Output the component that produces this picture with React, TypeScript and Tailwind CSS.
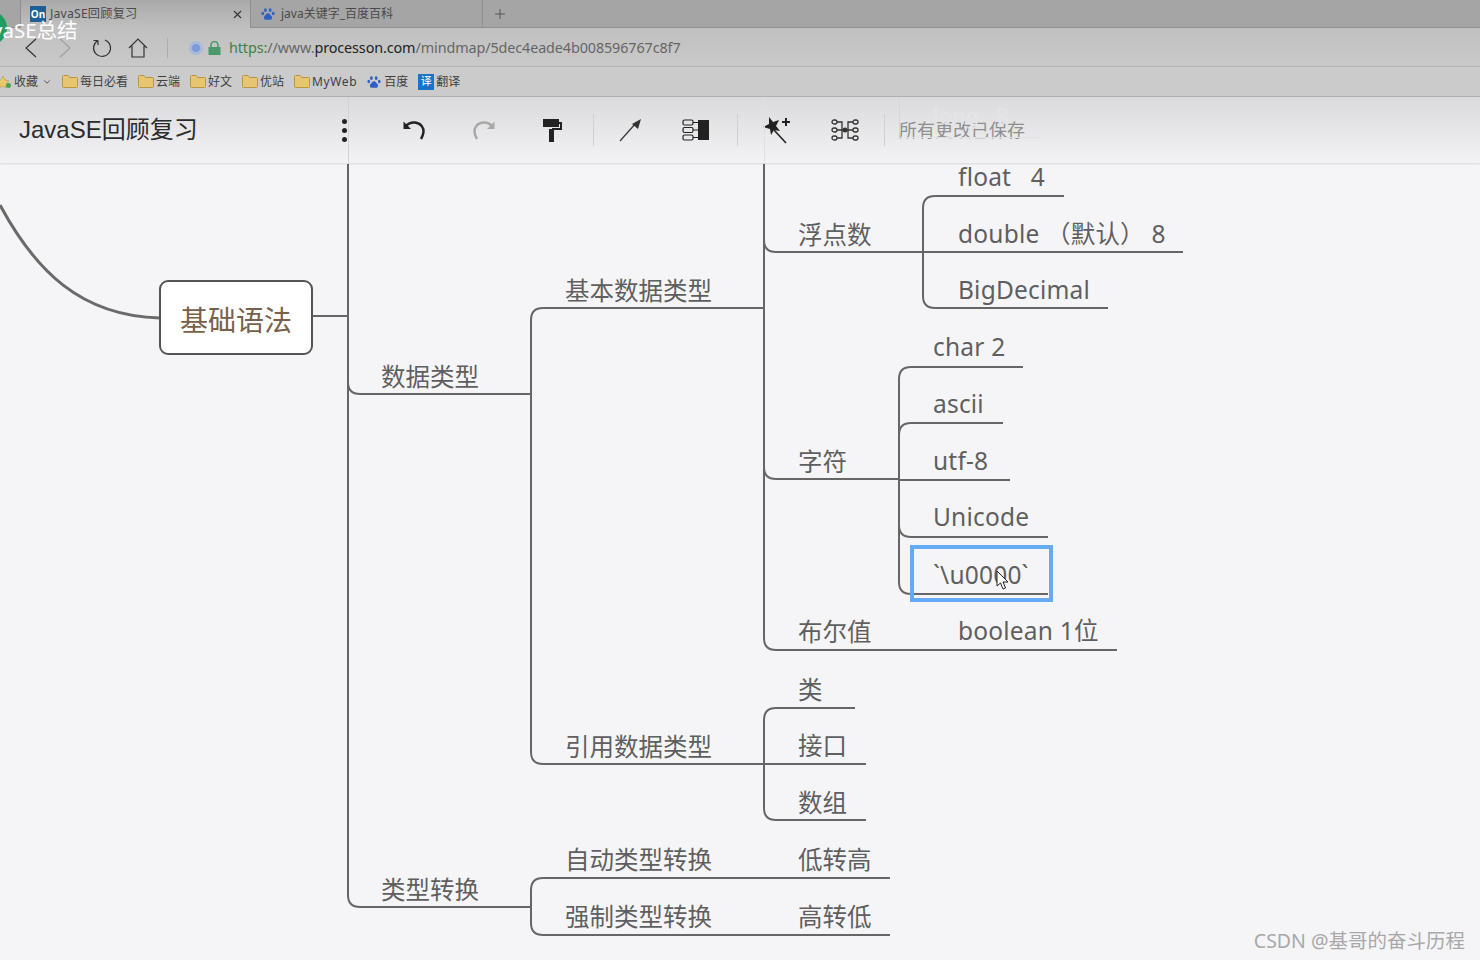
import { ChevronDown, Plus, X } from "lucide-react";

const font = { fontFamily: '"Noto Sans", "Noto Sans CJK SC", sans-serif' };

// connector lines, page coordinates
const lines = [
  "M348 164V895Q348 907 360 907H531",
  "M348 382Q348 394 360 394H531",
  "M312 316H348",
  "M531 752V320Q531 308 543 308H764",
  "M531 752Q531 764 543 764H866",
  "M764 164V638Q764 650 776 650H1117",
  "M764 240Q764 252 776 252H923",
  "M764 467Q764 479 776 479H899",
  "M923 296V208Q923 196 935 196H1064",
  "M923 252H1183",
  "M923 296Q923 308 935 308H1108",
  "M899 582V379Q899 367 911 367H1023",
  "M899 435Q899 423 911 423H1003",
  "M899 480H1010",
  "M899 525Q899 537 911 537H1048",
  "M899 582Q899 594 911 594H1048",
  "M764 808V720Q764 708 776 708H855",
  "M764 808Q764 820 776 820H866",
  "M531 923V890Q531 878 543 878H890",
  "M531 923Q531 935 543 935H890",
];

const labels: [string, number, number][] = [
  ["float   4", 958, 177],
  ["double （默认） 8", 958, 234],
  ["BigDecimal", 958, 290],
  ["浮点数", 798, 235],
  ["基本数据类型", 565, 291],
  ["数据类型", 381, 377],
  ["char 2", 933, 347],
  ["ascii", 933, 404],
  ["utf-8", 933, 461],
  ["Unicode", 933, 517],
  ["`\\u0000`", 933, 575],
  ["字符", 798, 462],
  ["布尔值", 798, 632],
  ["boolean 1位", 958, 631],
  ["类", 798, 690],
  ["接口", 798, 746],
  ["数组", 798, 803],
  ["引用数据类型", 565, 747],
  ["自动类型转换", 565, 860],
  ["低转高", 798, 860],
  ["强制类型转换", 565, 917],
  ["高转低", 798, 917],
  ["类型转换", 381, 890],
];

function Paw({ size = 14 }: { size?: number }) {
  return (
    <svg width={size} height={size} viewBox="0 0 16 16" fill="#2f5fc4">
      <ellipse cx="5" cy="3.5" rx="1.6" ry="2.2" />
      <ellipse cx="10.5" cy="3.5" rx="1.6" ry="2.2" />
      <ellipse cx="2" cy="7.5" rx="1.5" ry="2" />
      <ellipse cx="14" cy="7.5" rx="1.5" ry="2" />
      <path d="M8 7c-2 0-2.400 2-4 3.200C2.600 11.500 3.500 15 6 14.600c1-.2 3-.2 4 0 2.500.4 3.400-3.100 2-4.400C10.400 9 10 7 8 7z" />
    </svg>
  );
}

function Folder() {
  return (
    <svg width="16" height="13" viewBox="0 0 16 13">
      <path d="M.5 1.500Q.5 .5 1.500 .5H6L7.500 2.500H14.500Q15.500 2.500 15.500 3.500V11.500Q15.500 12.500 14.500 12.500H1.500Q.5 12.500 .5 11.500Z" fill="#e6c671" stroke="#b9963f" />
    </svg>
  );
}

function Mark({ label }: { label: string }) {
  return (
    <div className="flex items-center gap-[2px]">
      <Folder />
      <span>{label}</span>
    </div>
  );
}

function Sep() {
  return <div className="h-[32px] w-px bg-[#d0d0d2]" />;
}

function Undo({ color }: { color: string }) {
  return (
    <svg width="28" height="28" viewBox="0 0 28 28" fill="none" stroke={color} strokeWidth="2.4">
      <path d="M5 11Q9 6 15 6.500C21 7 24 12 23.500 16Q23 20 21 23" />
      <path d="M3.500 5.500V13H11Z" fill={color} stroke="none" />
    </svg>
  );
}

export default function App() {
  return (
    <div className="relative h-[960px] w-[1480px] overflow-hidden bg-[#f5f5f8]" style={font}>
      {/* mind map canvas */}
      <div className="absolute inset-0">
        <svg className="absolute inset-0" width="1480" height="960" fill="none" stroke="#666666" strokeWidth="2">
          {lines.map((d) => (
            <path key={d} d={d} />
          ))}
          <path d="M0 205C35 270 80 316 160 318" strokeWidth="3" stroke="#6a6a6a" />
        </svg>
        <div className="absolute left-[159px] top-[280px] flex h-[75px] w-[154px] items-center justify-center rounded-[9px] border-[2.5px] border-[#555555] bg-white pt-[4px] text-[28px] text-[#7a6048]">
          基础语法
        </div>
        {labels.map(([text, x, y]) => (
          <div
            key={text}
            className={
              /^[a-zA-Z`]/.test(text)
                ? "absolute -translate-y-1/2 whitespace-pre text-[24.5px] leading-none tracking-[0.2px] text-[#5f5f5f]"
                : "absolute -translate-y-1/2 whitespace-pre text-[24.5px] leading-none text-[#5f5f5f]"
            }
            style={{ left: x, top: y }}
          >
            {text}
          </div>
        ))}
        <div className="absolute left-[910px] top-[545px] h-[57px] w-[143px] border-4 border-[#64aaf5]" />
        <svg className="absolute left-[996px] top-[570px]" width="14" height="21" viewBox="0 0 14 21">
          <path d="M1 1V16L4.500 13L7 19L9.500 18L7 12H12Z" fill="#ffffff" stroke="#222222" strokeWidth="1" />
        </svg>
        <div className="absolute bottom-[10px] right-[15px] text-[19.500px] leading-none text-[#a8a8a8]">CSDN @基哥的奋斗历程</div>
      </div>

      {/* browser chrome */}
      <div className="relative z-10">
        <div className="flex h-[28px] border-b border-[#8f8f8f] bg-[#a5a5a5] pl-[20px] text-[12.200px] text-[#4a4a4a]">
          <div className="flex h-[28px] w-[231px] items-center gap-[4px] border-x border-[#8f8f8f] bg-gradient-to-b from-[#a9a9a9] to-[#c0c0c0] pl-[9px] pr-[6px]">
            <span className="flex h-[16px] w-[16px] items-center justify-center bg-[#1d5f96] text-[10px] font-bold text-white">On</span>
            <span className="flex-1 tracking-[0.2px]">JavaSE回顾复习</span>
            <X size={13} className="text-[#333333]" />
          </div>
          <div className="flex h-[28px] w-[232px] items-center gap-[6px] border-r border-[#8f8f8f] pl-[10px]">
            <Paw />
            <span className="text-[12px]">java关键字_百度百科</span>
          </div>
          <Plus size={16} strokeWidth={1.2} className="ml-[9px] mt-[6px] text-[#444444]" />
        </div>
        <div className="flex h-[39px] items-center border-b border-[#b4b4b4] bg-gradient-to-b from-[#c0c0c0] to-[#c9c9c9] pl-[24px] pt-[1px] text-[14.370px]">
          <svg width="14" height="20" viewBox="0 0 14 20" fill="none" stroke="#333333" strokeWidth="1.200">
            <path d="M12 1L2 10L12 19" />
          </svg>
          <svg className="ml-[20px]" width="14" height="20" viewBox="0 0 14 20" fill="none" stroke="#a0a0a0" strokeWidth="1.200">
            <path d="M2 1L12 10L2 19" />
          </svg>
          <svg className="ml-[19px]" width="22" height="22" viewBox="0 0 22 22" fill="none" stroke="#333333" strokeWidth="1.2">
            <path d="M7 3.500A8.500 8.500 0 1 0 14 3M7 3.500V8M7 3.500H2.500" />
          </svg>
          <svg className="ml-[15px]" width="20" height="20" viewBox="0 0 20 20" fill="none" stroke="#333333" strokeWidth="1.200">
            <path d="M1 10L10 1L19 10M4 8V19H16V8" />
          </svg>
          <div className="ml-[19px] h-[20px] w-px bg-[#acacac]" />
          <span className="ml-[21px] h-[14px] w-[14px] rounded-full border-[3px] border-[#a9bbdc] bg-[#7d9bd8]" />
          <svg className="ml-[4px]" width="16" height="14" viewBox="0 0 16 14">
            <path d="M4 6V4a3.500 3.500 0 0 1 7 0V6" fill="none" stroke="#4a9a6b" strokeWidth="1.600" />
            <rect x="1.500" y="6" width="12" height="8" fill="#4a9a6b" />
          </svg>
          <span className="ml-[6px] tracking-[-0.1px] text-[#666666]">
            <span className="text-[#3f7f4a]">https:</span>//www.<span className="text-[#222222]">processon.com</span>/mindmap/5dec4eade4b008596767c8f7
          </span>
        </div>
        <div className="flex h-[30px] items-center gap-[10px] border-b border-[#b2b2b2] bg-[#cbcbcb] text-[12px] text-[#3f3f3f]">
          <div className="flex items-center gap-[2px]">
            <svg width="12" height="14" viewBox="0 0 12 14">
              <path d="M3 1L5 5L9 6L6 9L6.500 13L3 11L-1 13L0 9L-3 6L1 5Z" fill="#e9cb6b" stroke="#b59a3d" strokeWidth=".6" />
              <circle cx="8.500" cy="10.500" r="2.500" fill="#4aa35c" />
            </svg>
            <span>收藏</span>
            <ChevronDown size={10} className="ml-[2px]" />
          </div>
          <Mark label="每日必看" />
          <Mark label="云端" />
          <Mark label="好文" />
          <Mark label="优站" />
          <div className="flex items-center gap-[2px]">
            <Folder />
            <span className="tracking-[0.6px]">MyWeb</span>
          </div>
          <div className="flex items-center gap-[3px]">
            <Paw />
            <span>百度</span>
          </div>
          <div className="flex items-center gap-[2px]">
            <span className="flex h-[16px] w-[16px] items-center justify-center bg-[#1a73c8] text-[11px] text-white">译</span>
            <span>翻译</span>
          </div>
        </div>

        {/* editor toolbar, see-through over the map */}
        <div className="relative flex h-[66px] items-center bg-gradient-to-b from-[#d9d9db]/95 to-[#f3f3f5]/95 shadow-[0_1px_2px_rgba(0,0,0,0.12)]">
          <span className="ml-[19px] w-[318px] text-[24px] text-[#2b2b2b]" style={{ fontFamily: '"Liberation Sans", "Noto Sans CJK SC", sans-serif' }}>
            JavaSE回顾复习
          </span>
          <div className="flex w-[15px] flex-col items-center gap-[4px]">
            <span className="h-[5px] w-[5px] rounded-full bg-[#222222]" />
            <span className="h-[5px] w-[5px] rounded-full bg-[#222222]" />
            <span className="h-[5px] w-[5px] rounded-full bg-[#222222]" />
          </div>
          <div className="ml-[48px]"><Undo color="#222222" /></div>
          <svg className="ml-[42px] -scale-x-100" width="28" height="28" viewBox="0 0 28 28" fill="none" stroke="#a8a8a8" strokeWidth="2.400">
            <path d="M5 11Q9 6 15 6.500C21 7 24 12 23.500 16Q23 20 21 23" />
            <path d="M3.500 5.500V13H11Z" fill="#a8a8a8" stroke="none" />
          </svg>
          <svg className="ml-[43px]" width="24" height="26" viewBox="0 0 24 26" fill="#222222">
            <rect x="2" y="2" width="16" height="8" />
            <path d="M18 5H21V13H11V11H19V7H18Z" />
            <rect x="8" y="12" width="5" height="13" />
          </svg>
          <div className="ml-[28px]"><Sep /></div>
          <svg className="ml-[23px]" width="26" height="28" viewBox="0 0 26 28" fill="#333333">
            <path d="M3 25L19 7" stroke="#333333" strokeWidth="1.200" />
            <path d="M24 3L21 13L15 8Z" />
          </svg>
          <svg className="ml-[39px]" width="28" height="24" viewBox="0 0 28 24" fill="none" stroke="#222222" strokeWidth="1.200">
            <rect x="1" y="2" width="10" height="5" rx="1.500" />
            <rect x="1" y="9.500" width="10" height="5" rx="1.500" />
            <rect x="1" y="17" width="10" height="5" rx="1.500" />
            <path d="M11 4.500H16M11 12H16M11 19.500H16" />
            <rect x="16" y="2" width="11" height="20" fill="#222222" stroke="none" />
          </svg>
          <div className="ml-[27px]"><Sep /></div>
          <svg className="ml-[23px]" width="32" height="32" viewBox="0 0 32 32" fill="#222222">
            <path d="M8 3L12 8L18 6L15 12L19 17L13 16L10 21L9 15L2 13L8 10Z" />
            <path d="M13 16L25 29" stroke="#222222" strokeWidth="1.600" />
            <path d="M25 4V12M21 8H29" stroke="#222222" strokeWidth="2" />
          </svg>
          <svg className="ml-[38px]" width="28" height="24" viewBox="0 0 28 24" fill="none" stroke="#333333" strokeWidth="1.300">
            <rect x="1" y="2" width="5" height="4" rx="2" />
            <rect x="22" y="2" width="5" height="4" rx="2" />
            <rect x="1" y="10" width="5" height="4" rx="2" />
            <rect x="22" y="10" width="5" height="4" rx="2" />
            <rect x="1" y="18" width="5" height="4" rx="2" />
            <rect x="22" y="18" width="5" height="4" rx="2" />
            <path d="M6 4H11V20H6M22 4H17V20H22M6 12H22" />
            <circle cx="14" cy="12" r="2.500" fill="#333333" stroke="none" />
          </svg>
          <div className="ml-[25px]"><Sep /></div>
          <span className="ml-[14px] text-[18px] text-[#8f8f8f]">所有更改已保存</span>
          {/* map showing through */}
          <div className="absolute left-[348px] top-0 h-full w-px bg-[#d2d2d4]" />
          <div className="absolute left-[764px] top-0 h-full w-px bg-[#e0e0e2]" />
          <div className="absolute left-[899px] top-0 h-[40px] w-px bg-[#d6d6d8]" />
          <div className="absolute left-[933px] top-[7px] whitespace-pre text-[22px] leading-none text-[#e4e4e6]">long   8</div>
          <div className="absolute left-[900px] top-[40px] h-px w-[140px] bg-[#e2e2e4]" />
        </div>
      </div>

      {/* video title overlay */}
      <div className="absolute -left-[27px] top-[11px] z-20 h-[34px] w-[34px] rounded-full bg-[#1f9d61]" />
      <div className="absolute -left-[8px] top-[18px] z-20 text-[20.500px] leading-[24px] text-white">vaSE总结</div>
    </div>
  );
}
